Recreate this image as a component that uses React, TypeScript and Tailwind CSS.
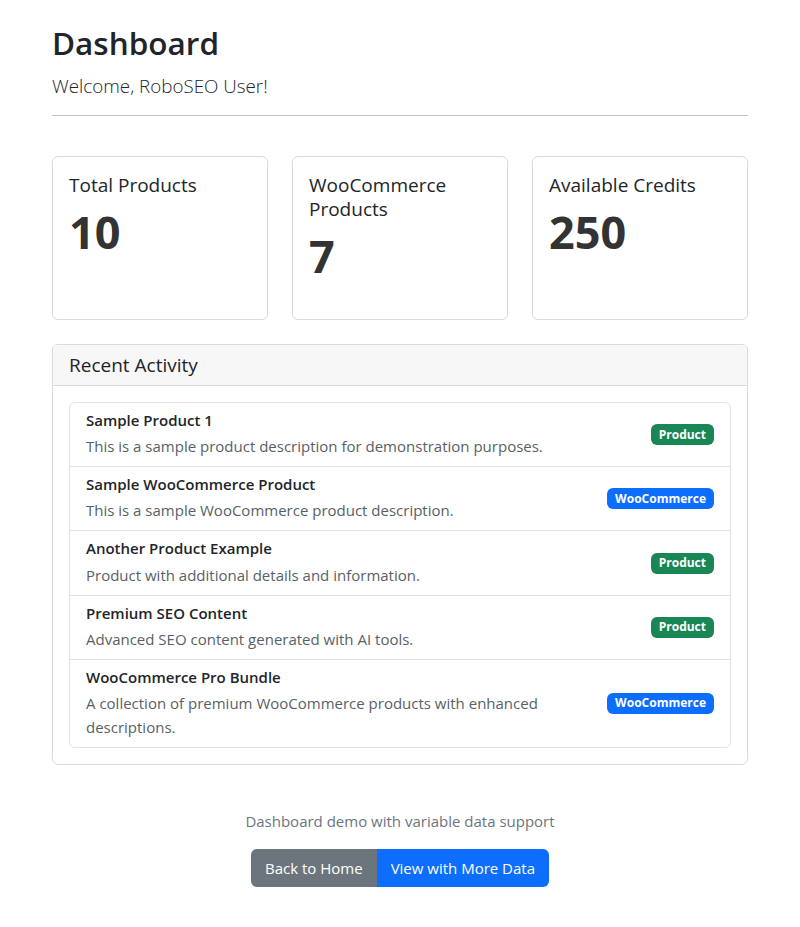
type Activity = {
  title: string;
  description: string;
  type: 'product' | 'woocommerce';
};

const stats = [
  { label: 'Total Products', value: '10' },
  { label: 'WooCommerce Products', value: '7' },
  { label: 'Available Credits', value: '250' },
];

const activities: Activity[] = [
  { title: 'Sample Product 1', description: 'This is a sample product description for demonstration purposes.', type: 'product' },
  { title: 'Sample WooCommerce Product', description: 'This is a sample WooCommerce product description.', type: 'woocommerce' },
  { title: 'Another Product Example', description: 'Product with additional details and information.', type: 'product' },
  { title: 'Premium SEO Content', description: 'Advanced SEO content generated with AI tools.', type: 'product' },
  { title: 'WooCommerce Pro Bundle', description: 'A collection of premium WooCommerce products with enhanced descriptions.', type: 'woocommerce' },
];

function Badge({ type }: { type: Activity['type'] }) {
  const isWoo = type === 'woocommerce';
  return (
    <span
      className={
        'shrink-0 rounded-[6px] px-[8px] py-[4.5px] text-[12px] font-bold leading-none text-white ' +
        (isWoo ? 'bg-[#0d6efd]' : 'bg-[#198754]')
      }
    >
      {isWoo ? 'WooCommerce' : 'Product'}
    </span>
  );
}

export default function App() {
  return (
    <div className="min-h-[927px] bg-white font-['Open_Sans','Noto_Sans',sans-serif] text-[15px] leading-[24px] text-[#212529]">
      <div className="mx-auto w-[696px] pt-[22px] pb-[40px]">
        <h1 className="mb-[8px] text-[31.5px] font-semibold leading-[41px]">Dashboard</h1>
        <p className="text-[18.8px] font-light leading-[30px]">Welcome, RoboSEO User!</p>
        <hr className="mt-[14px] mb-[40px] border-0 border-t border-[#bfbfbf]" />

        <div className="grid grid-cols-3 gap-[24px]">
          {stats.map((s) => (
            <div key={s.label} className="h-[164px] rounded-[6px] border border-[#dadada] p-[16px]">
              <h5 className="mb-[8px] text-[19px] font-medium leading-[24px]">{s.label}</h5>
              <div className="text-[45px] font-bold leading-[54px] text-[#333]">{s.value}</div>
            </div>
          ))}
        </div>

        <div className="mt-[24px] overflow-hidden rounded-[6px] border border-[#dadada]">
          <div className="border-b border-[#dadada] bg-[#f7f7f8] px-[16px] py-[8px]">
            <h5 className="text-[19px] font-medium leading-[24px]">Recent Activity</h5>
          </div>
          <div className="p-[16px]">
            <ul className="rounded-[6px] border border-[#dee2e6]">
              {activities.map((a) => (
                <li
                  key={a.title}
                  className="flex items-center justify-between gap-[16px] border-t border-[#dee2e6] px-[16px] py-[8px] first:border-t-0"
                >
                  <div>
                    <h6 className="mb-[4px] text-[15px] font-semibold leading-[19.2px]">{a.title}</h6>
                    <p className="text-[#595f66]">{a.description}</p>
                  </div>
                  <Badge type={a.type} />
                </li>
              ))}
            </ul>
          </div>
        </div>

        <div className="mt-[44px] text-center">
          <p className="mb-[16px] text-[#6c757d]">Dashboard demo with variable data support</p>
          <div className="inline-flex">
            <button className="rounded-l-[6px] bg-[#6c757d] px-[14px] py-[7px] text-white">Back to Home</button>
            <button className="rounded-r-[6px] bg-[#0d6efd] px-[14px] py-[7px] text-white">View with More Data</button>
          </div>
        </div>
      </div>
    </div>
  );
}
